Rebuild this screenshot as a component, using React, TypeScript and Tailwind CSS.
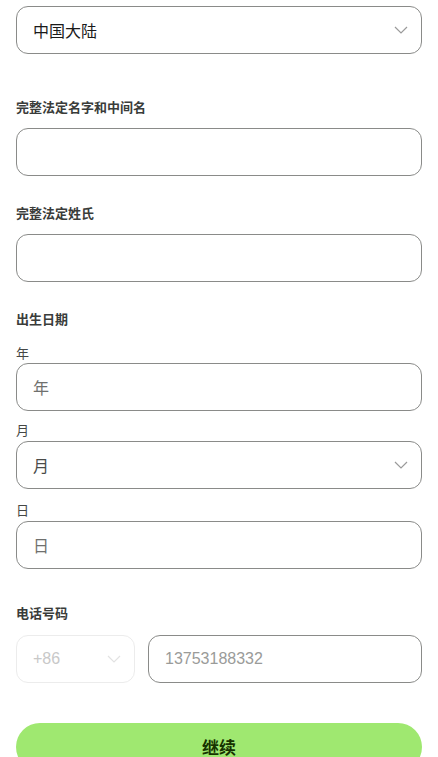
const FONT = { fontFamily: '"Noto Sans CJK SC", "Liberation Sans", sans-serif' };

function Chevron({ className = "" }: { className?: string }) {
  return (
    <svg
      width="14"
      height="8"
      viewBox="0 0 14 8"
      fill="none"
      className={className}
    >
      <path d="M1 1l6 6 6-6" stroke="currentColor" strokeWidth="1.2" />
    </svg>
  );
}

function Label({ children, className = "" }: { children: React.ReactNode; className?: string }) {
  return (
    <div className={`h-5 text-[13px] leading-5 font-bold text-[#3a3c3a] ${className}`}>
      {children}
    </div>
  );
}

function SubLabel({ children, className = "" }: { children: React.ReactNode; className?: string }) {
  return (
    <div className={`h-5 text-[13px] leading-5 text-[#454745] ${className}`}>{children}</div>
  );
}

function Box({
  children,
  className = "",
  select = false,
}: {
  children?: React.ReactNode;
  className?: string;
  select?: boolean;
}) {
  return (
    <div
      className={`flex h-12 items-center justify-between rounded-[12px] border border-[#8a8b89] bg-white pl-4 pr-[13px] ${className}`}
    >
      <span className="text-base">{children}</span>
      {select && <Chevron className="text-[#9a9a9a]" />}
    </div>
  );
}

export default function App() {
  return (
    <div className="min-h-[757px] overflow-hidden bg-white px-4 pt-[6px]" style={FONT}>
      <Box select>
        <span className="text-[#1a1a1a]">中国大陆</span>
      </Box>

      <Label className="mt-[43px]">完整法定名字和中间名</Label>
      <Box className="mt-[11px]" />

      <Label className="mt-[27px]">完整法定姓氏</Label>
      <Box className="mt-[11px]" />

      <Label className="mt-[27px]">出生日期</Label>
      <SubLabel className="mt-[14px]">年</SubLabel>
      <Box>
        <span className="text-[#6f706e]">年</span>
      </Box>
      <SubLabel className="mt-[9px]">月</SubLabel>
      <Box className="mt-px" select>
        <span className="text-[#4a4b49]">月</span>
      </Box>
      <SubLabel className="mt-[11px]">日</SubLabel>
      <Box className="mt-px">
        <span className="text-[#6f706e]">日</span>
      </Box>

      <Label className="mt-[34px]">电话号码</Label>
      <div className="mt-[12px] flex gap-[13px]">
        <div className="flex h-12 w-[119px] items-center justify-between rounded-[12px] border border-[#ececec] pl-4 pr-[13px]">
          <span className="text-base text-[#c8c8c8]" style={{ fontFamily: '"Liberation Sans", sans-serif' }}>
            +86
          </span>
          <Chevron className="text-[#e2e2e2]" />
        </div>
        <div className="flex h-12 flex-1 items-center rounded-[12px] border border-[#8a8b89] pl-4">
          <span
            className="text-base text-[#9a9b99]"
            style={{ fontFamily: '"Liberation Sans", sans-serif' }}
          >
            13753188332
          </span>
        </div>
      </div>

      <button className="mt-[40px] flex h-12 w-full items-center justify-center rounded-full bg-[#9fe870] text-[17px] font-bold text-[#163300]">
        继续
      </button>
    </div>
  );
}
